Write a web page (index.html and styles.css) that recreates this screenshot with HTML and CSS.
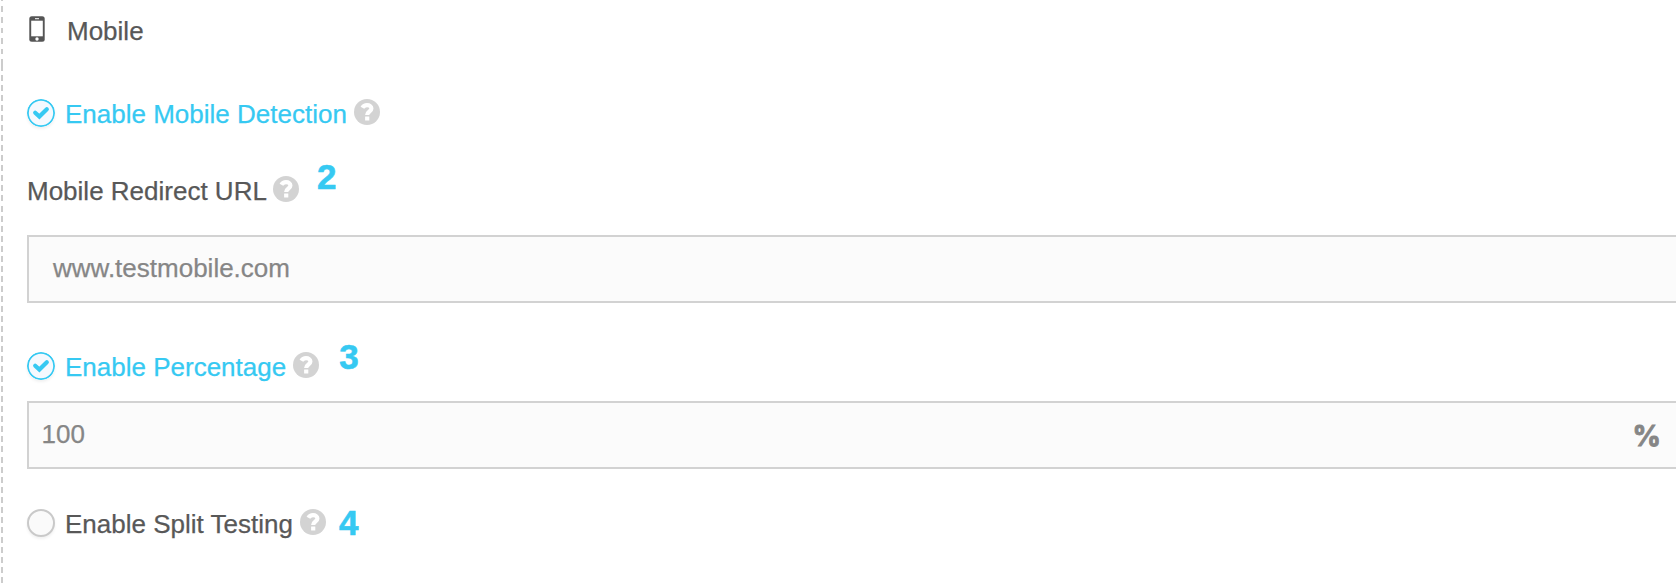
FILE: index.html
```html
<!DOCTYPE html>
<html lang="en">
<head>
<meta charset="utf-8">
<title>Mobile settings</title>
<link rel="stylesheet" href="styles.css">
</head>
<body>
<svg class="defs" width="0" height="0">
  <symbol id="help" viewBox="0 0 26 26">
    <circle cx="13" cy="13" r="13" fill="#d3d3d3"/>
    <path d="M8.400 8.800C9.500 6.900 11 6.200 13 6.200c2.600 0 4.400 1.400 4.400 3.300 0 3.100-4.200 2.800-4.200 6.400" fill="none" stroke="#fff" stroke-width="4.200"/>
    <rect x="11.100" y="17.500" width="4.200" height="4" rx=".3" fill="#fff"/>
  </symbol>
  <symbol id="check" viewBox="0 0 28 28">
    <circle cx="14" cy="14" r="13.100" fill="#f5f9fe" stroke="#36c9f2" stroke-width="1.800"/>
    <path d="M8.200 13.700l4.200 3.900 7.400-7.300" fill="none" stroke="#36c9f2" stroke-width="4.200" stroke-linecap="round"/>
  </symbol>
</svg>
<main class="panel">
  <div class="row title">
    <svg class="phone" viewBox="0 0 16 26"><rect x=".3" y=".3" width="15.400" height="25.400" rx="2.500" fill="#555"/><rect x="2.200" y="4.700" width="11.600" height="15.600" fill="#fff"/><rect x="6" y="2.200" width="4" height="1" fill="#fff"/><circle cx="8" cy="23" r="1.700" fill="#fff"/></svg>
    <span class="label">Mobile</span>
  </div>
  <div class="row detection on">
    <svg class="check"><use href="#check"/></svg>
    <span class="label">Enable Mobile Detection</span>
    <svg class="help"><use href="#help"/></svg>
  </div>
  <div class="row redirect">
    <span class="label">Mobile Redirect URL</span>
    <svg class="help"><use href="#help"/></svg>
    <b class="step">2</b>
  </div>
  <div class="field url"><span>www.testmobile.com</span></div>
  <div class="row percentage on">
    <svg class="check"><use href="#check"/></svg>
    <span class="label">Enable Percentage</span>
    <svg class="help"><use href="#help"/></svg>
    <b class="step">3</b>
  </div>
  <div class="field amount"><span>100</span><b class="unit">%</b></div>
  <div class="row split">
    <i class="radio"></i>
    <span class="label">Enable Split Testing</span>
    <svg class="help"><use href="#help"/></svg>
    <b class="step">4</b>
  </div>
</main>
</body>
</html>
```
FILE: styles.css
```css
* { box-sizing: border-box; }
body {
  margin: 0;
  height: 586px;
  overflow: hidden;
  background: #fff;
  color: #585858;
  font: 26px/40px "Liberation Sans", Arial, sans-serif;
}
.defs { display: block; }
.panel {
  height: 586px;
  padding: 11px 0 0 27px;
  background:
    repeating-linear-gradient(#ccc 0 5.5px, transparent 5.5px 10.6px) 1px -4.2px / 2px 69.2px no-repeat,
    linear-gradient(#ccc, #ccc) 1px 65px / 2px 6px no-repeat,
    repeating-linear-gradient(#ccc 0 6px, transparent 6px 10.04px) 1px 75px / 2px 520px no-repeat;
}
.row { display: flex; align-items: center; height: 40px; white-space: nowrap; }
.on { color: #36c9f2; }
.label { flex: none; -webkit-text-stroke: .25px currentColor; }
.phone { width: 16px; height: 26px; margin: 0 22px 5px 2px; }
.check, .radio { flex: none; width: 28px; height: 28px; margin: 0 10px 2px 0; border-radius: 50%; box-shadow: 0 2px 3px rgba(0,0,0,.06); }
.radio { border: 2px solid #c9c9c9; background: #fafafa; }
.help { flex: none; width: 26px; height: 26px; margin: 0 0 4px 7px; }
.redirect .help { margin-left: 6px; }
.step { color: #36c9f2; font-size: 35px; line-height: 40px; -webkit-text-stroke: .6px currentColor; }
.detection { margin-top: 43px; }
.redirect { margin-top: 37px; }
.redirect .step { margin: 0 0 28px 18px; }
.percentage { margin-top: 44px; }
.percentage .step { margin: 0 0 20px 20px; }
.split { margin-top: 35px; }
.split .step { margin: 0 0 2px 13px; }
.field {
  display: flex;
  align-items: center;
  justify-content: space-between;
  height: 68px;
  border: 2px solid #d2d2d2;
  border-right: 0;
  background: #fbfbfb;
  color: #868686;
}
.field span { -webkit-text-stroke: .25px currentColor; }
.url { margin-top: 24px; padding: 0 0 2px 24px; }
.amount { margin-top: 14px; padding: 0 15px 2px 12.5px; }
.unit { padding-top: 3px; font: 700 28px/40px Inter, sans-serif; -webkit-text-stroke: .9px currentColor; }
```
